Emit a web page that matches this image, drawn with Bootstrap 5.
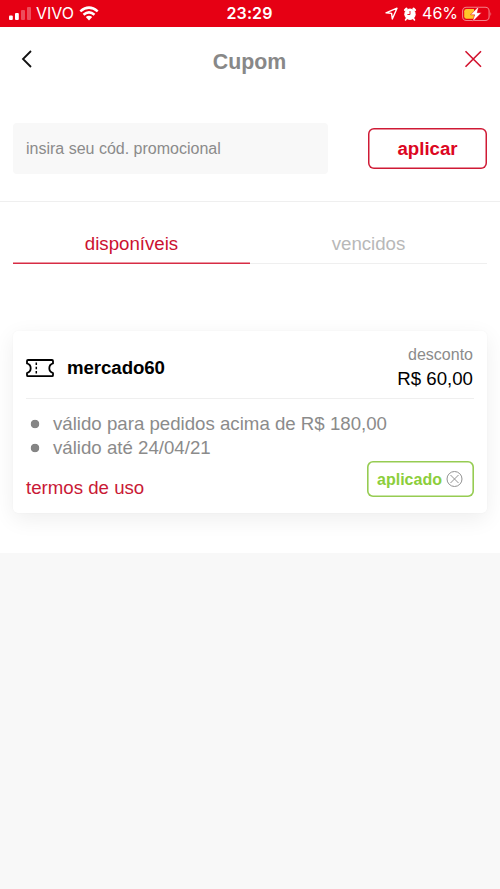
<!DOCTYPE html>
<html lang="pt-BR">
<head>
<meta charset="utf-8">
<meta name="viewport" content="width=device-width, initial-scale=1">
<title>Cupom</title>
<link href="https://cdn.jsdelivr.net/npm/bootstrap@5.3.0/dist/css/bootstrap.min.css" rel="stylesheet">
<style>
  :root { --brand: #dc0622; --ink-soft: #8b8b8b; --line: #efefef; }
  body { background: #f8f8f8; font-family: "Liberation Sans", Arial, sans-serif; font-size: 18.67px; line-height: 24px; color: #000; height: 889px; overflow: hidden; }
  svg { display: block; flex: none; }
  .status { height: 27px; background: #e60014; color: #fff; font-family: Inter, sans-serif; font-size: 16px; line-height: 27px; padding: 0 8px 0 9px; }
  .status-side { flex: 1 1 0; }
  .clock { font-weight: 600; font-size: 16px; letter-spacing: .1px; margin-left: -2px; }
  .sheet { height: 526px; }
  .title-bar { height: 70px; padding: 0 14px 0 17px; }
  .title-bar h1 { font-size: 21.33px; line-height: 26px; color: #888; }
  .icon-btn { border: 0; background: none; padding: 0; }
  .promo { height: 105px; padding: 26px 13px 0; border-bottom: 1px solid var(--line); }
  .promo .form-control { width: 315px; height: 51px; border: 0; border-radius: 4px; background: #f8f8f8; font-size: 16px; padding: 0 13px; color: #555; }
  .promo .form-control::placeholder { color: #8b8b8b; opacity: 1; }
  .btn-apply { width: 119px; height: 41px; margin-top: 5px; border: 0; box-shadow: inset 0 0 0 1.5px #cf1a35; border-radius: 6px; color: var(--brand); font-size: 18.67px; line-height: 24px; padding: 1px 0 0; }
  .coupon-tabs { margin: 29px 13px 0; height: 33px; box-shadow: inset 0 -1px var(--line); }
  .coupon-tabs .nav-link { height: 33px; padding: 1px 0 0; color: #b8b8b8; border-radius: 0; border: 0; }
  .coupon-tabs .nav-link.active { color: #cb1130; box-shadow: inset 0 -1.6px #d72c44; }
  .coupon { margin: 67px 13px 0; height: 182px; border: 0; border-radius: 5px; padding: 0 13px; box-shadow: 0 6px 22px rgba(0,0,0,.07), 0 0 2px rgba(0,0,0,.04); color: #000; }
  .coupon-head { height: 68px; border-bottom: 1px solid var(--line); }
  .ticket { margin-top: 7px; }
  .code { margin-left: 13px; padding-top: 6px; letter-spacing: -.07px; }
  .off-side { margin-right: 1px; }
  .off-label { font-size: 16px; color: var(--ink-soft); }
  .rules { margin: 13px 0 0; color: var(--ink-soft); }
  .rules li { padding-left: 27px; background: radial-gradient(circle at 9px 12px, #858585 4px, transparent 4.6px); }
  .terms { color: #c91936; }
  .tag-applied { width: 107px; height: 36px; margin-top: 1px; box-shadow: inset 0 0 0 1.6px #96cc52; border-radius: 6px; color: #8cce3b; font-size: 16px; padding: 1px 1px 0 0; }
</style>
</head>
<body>
<div class="status d-flex">
  <div class="status-side d-flex align-items-center">
    <svg width="23" height="14" viewBox="0 0 23 14" fill="#fff"><rect x="0" y="8.500" width="3.800" height="4.500" rx="1"/><rect x="6" y="6" width="3.800" height="7" rx="1"/><g opacity=".3"><rect x="12" y="3" width="4" height="10" rx="1"/><rect x="18" y="0" width="4" height="13" rx="1"/></g></svg>
    <span class="ms-1">VIVO</span>
    <svg class="ms-1" width="22" height="15" viewBox="-1.500 0 22 15"><g fill="none" stroke="#fff" stroke-width="2.500"><path d="M.8 5.400Q9.500-2.200 18.200 5.400"/><path d="M4 8.800Q9.500 4 15 8.800"/></g><path fill="#fff" d="M6.300 11Q9.500 8.300 12.700 11L9.500 14.400Z"/></svg>
  </div>
  <div class="clock">23:29</div>
  <div class="status-side d-flex align-items-center justify-content-end">
    <svg width="13" height="13" viewBox="0 0 13 13" fill="none" stroke="#fff" stroke-width="1.400" stroke-linejoin="round"><path d="M1 5.800 12 1.200 7.300 12 6.600 6.400Z"/></svg>
    <svg class="ms-1 me-1" width="16" height="14" viewBox="0 0 16 14"><g stroke="#fff" stroke-width="2.200" stroke-linecap="round"><path d="M3 3 4.500 1.700M13 3 11.500 1.700"/></g><path d="M4.500 11.500 3.500 13M11.500 11.500 12.500 13" stroke="#fff" stroke-width="1.500" stroke-linecap="round"/><circle cx="8" cy="7.300" r="5.700" fill="#fff"/><path d="M8 4V7.500H5.400" fill="none" stroke="#e60014" stroke-width=".9"/></svg>
    <span>46%</span>
    <svg class="ms-1" width="30" height="16" viewBox="0 0 30 16"><rect x=".6" y="1.200" width="26.500" height="13.300" rx="3.800" fill="none" stroke="#fff" stroke-opacity=".5" stroke-width="1.100"/><path d="M4.500 3H12V12.700H4.500Q2.200 12.700 2.200 10.400V5.300Q2.200 3 4.500 3Z" fill="#ffc629"/><path d="M28.500 5.800Q30 8 28.500 10.200Z" fill="#fff" fill-opacity=".5"/><path d="M16.800.3 8.500 8.800H12.600L10.500 15.700 19.500 6.700H15.200Z" fill="#fff" stroke="#e60014" stroke-width=".5"/></svg>
  </div>
</div>

<main class="sheet bg-white">
  <header class="title-bar d-flex justify-content-between align-items-center">
    <button class="icon-btn" aria-label="Voltar"><svg width="20" height="24" viewBox="0 0 20 24" fill="none" stroke="#111" stroke-width="1.800"><path d="M14 1 6 9 14 17"/></svg></button>
    <h1 class="m-0 fw-bold">Cupom</h1>
    <button class="icon-btn" aria-label="Fechar"><svg width="24" height="24" viewBox="0 0 24 24" fill="none" stroke="#d2122e" stroke-width="1.600"><path d="M3.500 1.300 19 16.700M19 1.300 3.500 16.700"/></svg></button>
  </header>

  <form class="promo d-flex align-items-start justify-content-between">
    <input class="form-control" type="text" placeholder="insira seu cód. promocional">
    <button class="btn btn-apply fw-bold" type="button">aplicar</button>
  </form>

  <nav class="coupon-tabs nav nav-fill">
    <a class="nav-link active w-50" href="#">disponíveis</a>
    <a class="nav-link w-50" href="#">vencidos</a>
  </nav>

  <article class="coupon card">
    <div class="coupon-head d-flex align-items-center justify-content-between">
      <div class="d-flex align-items-center">
        <svg class="ticket" width="28" height="19" viewBox="0 0 28 19" fill="none" stroke="#000" stroke-width="1.800" stroke-linejoin="round"><path d="M2 1H26Q27 1 27 2V4.400Q23.300 5.600 23.300 9.200T27 14V16.200Q27 17.200 26 17.200H2Q1 17.200 1 16.200V14Q4.700 12.800 4.700 9.200T1 4.400V2Q1 1 2 1Z"/><path d="M10.300 3.500V15.500" stroke-width="1.500" stroke-dasharray="2.500 1.700"/></svg>
        <strong class="code">mercado60</strong>
      </div>
      <div class="off-side text-end pt-1">
        <div class="off-label">desconto</div>
        <div>R$ 60,00</div>
      </div>
    </div>
    <ul class="rules list-unstyled">
      <li>válido para pedidos acima de R$ 180,00</li>
      <li>válido até 24/04/21</li>
    </ul>
    <div class="d-flex justify-content-between">
      <a class="terms text-decoration-none pt-3" href="#">termos de uso</a>
      <span class="tag-applied d-flex align-items-center justify-content-center fw-bold gap-1">aplicado
        <svg width="17" height="18" viewBox="0 0 17 18" fill="none" stroke="#929292" stroke-width="1"><circle cx="8.500" cy="8" r="7.500"/><path d="M4.500 4 12.500 12M12.500 4 4.500 12"/></svg>
      </span>
    </div>
  </article>
</main>
<script src="https://cdn.jsdelivr.net/npm/bootstrap@5.3.0/dist/js/bootstrap.bundle.min.js"></script>
</body>
</html>
